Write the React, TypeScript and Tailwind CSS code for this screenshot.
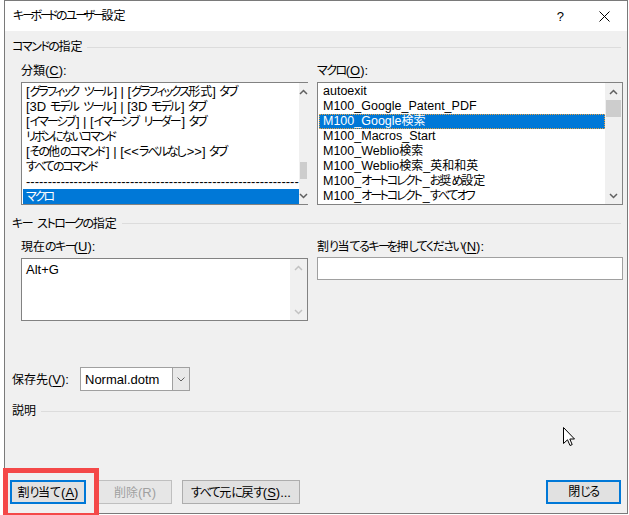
import React from 'react'

const leftItems = [
  '[グラフィック ツール] | [グラフィックス形式] タブ',
  '[3D モデル ツール] | [3D モデル] タブ',
  '[イマーシブ] | [イマーシブ リーダー] タブ',
  'リボンにないコマンド',
  '[その他のコマンド] | [<<ラベルなし>>] タブ',
  'すべてのコマンド',
  '-'.repeat(63),
  'マクロ',
]

const rightItems = [
  'autoexit',
  'M100_Google_Patent_PDF',
  'M100_Google検索',
  'M100_Macros_Start',
  'M100_Weblio検索',
  'M100_Weblio検索_英和和英',
  'M100_オートコレクト_お奨め設定',
  'M100_オートコレクト_すべてオフ',
]

// the dialog font has narrow kana and wider latin than Noto, so split into runs
const kindOf = (c: string) => {
  if (c === 'ー') return 'l'
  const code = c.charCodeAt(0)
  if (code >= 0x3040 && code <= 0x30ff) return 'k'
  if (code >= 0x4e00 && code <= 0x9fff) return 'h'
  return 'a'
}

type Variant = 'normal' | 'title' | 'list'

const runClass: Record<Variant, Record<string, string>> = {
  normal: { a: 'text-[13px]', k: 'tracking-[-1.5px]', l: 'tracking-[-3px]', h: '' },
  title: { a: 'text-[13px]', k: 'tracking-[-2px]', l: 'tracking-[-3.5px]', h: '' },
  list: { a: 'text-[13px]', k: 'tracking-[-2px]', l: 'tracking-[-2.5px]', h: '' },
}

// give latin text after kana back what the kana before it lost
const gapFix: Record<Variant, Record<string, string>> = {
  normal: { k: 'ml-[1.5px]', l: 'ml-[3px]' },
  title: { k: 'ml-[2px]', l: 'ml-[3.5px]' },
  list: { k: 'ml-[2px]', l: 'ml-[2.5px]' },
}

const T = ({ s, v = 'normal', latin }: { s: string; v?: Variant; latin?: string }) => {
  const runs: { k: string; t: string }[] = []
  for (const c of s) {
    const k = kindOf(c)
    const last = runs[runs.length - 1]
    if (last && last.k === k) last.t += c
    else runs.push({ k, t: c })
  }
  return (
    <span className="whitespace-pre">
      {runs.map((r, i) => {
        const prev = runs[i - 1]
        let cls = r.k === 'a' && latin ? latin : runClass[v][r.k]
        if (r.k === 'a' && prev && (prev.k === 'k' || prev.k === 'l')) {
          cls += ' ' + gapFix[v][prev.k]
        }
        return (
          <span key={i} className={cls}>
            {r.t}
          </span>
        )
      })}
    </span>
  )
}

const Chevron = ({ up, disabled }: { up?: boolean; disabled?: boolean }) => (
  <svg width="9" height="6" viewBox="0 0 9 6">
    <polyline
      points={up ? '1,5 4.5,1.5 8,5' : '1,1 4.5,4.5 8,1'}
      fill="none"
      stroke={disabled ? '#c2c2c2' : '#606060'}
      strokeWidth="1.5"
    />
  </svg>
)

const ScrollBar = ({ thumbTop, disabled }: { thumbTop?: string; disabled?: boolean }) => (
  <div className="flex h-full w-[17px] flex-col bg-[#f0f0f0]">
    <div className="flex h-[17px] items-center justify-center">
      <Chevron up disabled={disabled} />
    </div>
    <div className="flex-1">
      {thumbTop && <div className={`mx-px h-[17px] bg-[#cdcdcd] ${thumbTop}`} />}
    </div>
    <div className="flex h-[17px] items-center justify-center">
      <Chevron disabled={disabled} />
    </div>
  </div>
)

const Heading = ({ text, className }: { text: string; className: string }) => (
  <div className={`flex h-[14px] items-center pl-[7px] pr-[6px] ${className}`}>
    <T s={text} />
    <div className="ml-[5px] h-px flex-1 bg-[#dcdcdc]" />
  </div>
)

const Label = ({ pre, key1, post = '):', className = '' }: { pre: string; key1: string; post?: string; className?: string }) => (
  <div className={`flex h-[14px] items-center whitespace-nowrap ${className}`}>
    <span>
      <T s={pre} />
      <span className="text-[13px]">
        (<span className="underline underline-offset-2">{key1}</span>
        {post}
      </span>
    </span>
  </div>
)

const Button = ({
  children,
  w,
  primary,
  disabled,
}: {
  children: React.ReactNode
  w: string
  primary?: boolean
  disabled?: boolean
}) => (
  <div
    className={`flex h-[24px] items-center justify-center bg-[#e1e1e1] ${w} ${
      primary ? 'border-2 border-[#0078d7]' : 'border border-[#adadad]'
    } ${disabled ? 'border-[#bfbfbf] bg-[#e6e6e6] text-[#a0a0a0]' : ''}`}
  >
    {children}
  </div>
)

export default function App() {
  return (
    <div className="relative h-[515px] w-[629px] overflow-hidden bg-white font-['Liberation_Sans','Noto_Sans_CJK_JP',sans-serif] text-[12px] leading-none text-black [font-feature-settings:'palt']">
      <div className="ml-[4px] flex h-[514px] w-[624px] flex-col border border-[#7a7a7a]">
        {/* title bar */}
        <div className="flex h-[30px] items-center bg-white pl-[8px]">
          <T s="キーボードのユーザー設定" v="title" />
          <span className="ml-auto mr-[35px] text-[13px]">?</span>
          <svg width="11" height="11" viewBox="0 0 11 11" className="mr-[17px]">
            <path d="M0.5 0.5 L10.5 10.5 M10.5 0.5 L0.5 10.5" stroke="#000" strokeWidth="1" />
          </svg>
        </div>

        <div className="flex flex-1 flex-col bg-[#f0f0f0]">
          <Heading text="コマンドの指定" className="mt-[9px]" />

          <div className="mt-[9px] flex gap-[9px] pl-[16px]">
            <div className="flex w-[287px] flex-col">
              <Label pre="分類" key1="C" />
              <div className="mt-[5px] flex h-[123px] border border-[#828282] bg-white">
                <div className="flex-1 pt-px pl-[1px]">
                  {leftItems.map((t, i) => (
                    <div
                      key={i}
                      className={`flex h-[15px] items-center whitespace-nowrap pl-[3px] ${
                        i === 7 ? 'bg-[#0078d7] text-white' : ''
                      }`}
                    >
                      <T s={t} v="list" />
                    </div>
                  ))}
                </div>
                <ScrollBar thumbTop="mt-[62px]" />
              </div>
            </div>
            <div className="flex w-[306px] flex-col">
              <Label pre="マクロ" key1="O" />
              <div className="mt-[5px] flex h-[123px] border border-[#828282] bg-white">
                <div className="flex-1 pt-px pl-[1px]">
                  {rightItems.map((t, i) => (
                    <div
                      key={i}
                      className={`flex h-[15px] items-center whitespace-nowrap pl-[4px] ${
                        i === 2
                          ? 'bg-[#0078d7] text-white outline-1 outline-dotted outline-[#e8a040] -outline-offset-1'
                          : ''
                      }`}
                    >
                      <T s={t} v="list" latin="text-[12.5px]" />
                    </div>
                  ))}
                </div>
                <ScrollBar thumbTop="mt-0" />
              </div>
            </div>
          </div>

          <Heading text="キー ストロークの指定" className="mt-[11px]" />

          <div className="mt-[9px] flex gap-[9px] pl-[16px]">
            <div className="flex w-[287px] flex-col">
              <Label pre="現在のキー" key1="U" />
              <div className="mt-[5px] flex h-[63px] border border-[#828282] bg-white">
                <div className="flex-1 pl-[4px] pt-[3px]">
                  <div className="flex h-[15px] items-center text-[13px]">Alt+G</div>
                </div>
                <ScrollBar disabled />
              </div>
            </div>
            <div className="flex w-[306px] flex-col">
              <Label pre="割り当てるキーを押してください" key1="N" />
              <div className="mt-[4px] h-[23px] border border-[#a0a0a0] bg-white" />
            </div>
          </div>

          <div className="mt-[46px] flex items-center pl-[7px]">
            <Label pre="保存先" key1="V" className="w-[62px]" />
            <div className="ml-[6px] flex h-[24px] w-[110px] border border-[#a0a0a0] bg-white">
              <div className="flex flex-1 items-center pl-[4px] text-[13px]">Normal.dotm</div>
              <div className="flex w-[17px] items-center justify-center border-l border-[#a0a0a0] bg-[#e9e9e9]">
                <svg width="8" height="5" viewBox="0 0 8 5">
                  <polyline points="0.5,0.5 4,4 7.5,0.5" fill="none" stroke="#606060" strokeWidth="1" />
                </svg>
              </div>
            </div>
          </div>

          <Heading text="説明" className="mt-[13px]" />

          <div className="mt-[62px] flex items-center pl-[5px] pr-[6px]">
            <Button w="w-[76px]" primary>
              <span>
                <T s="割り当て" />
                <span className="ml-[1.5px] text-[13px]">
                  (<span className="underline underline-offset-2">A</span>)
                </span>
              </span>
            </Button>
            <div className="ml-[12px]">
              <Button w="w-[74px]" disabled>
                <T s="削除(R)" />
              </Button>
            </div>
            <div className="ml-[10px]">
              <Button w="w-[118px]">
                <span>
                  <T s="すべて元に戻す" />
                  <span className="text-[13px]">
                    (<span className="underline underline-offset-2">S</span>)...
                  </span>
                </span>
              </Button>
            </div>
            <div className="ml-auto">
              <Button w="w-[75px]" primary>
                <T s="閉じる" />
              </Button>
            </div>
          </div>
        </div>
      </div>

      {/* mouse pointer */}
      <svg width="13" height="20" viewBox="0 0 13 20" className="absolute left-[563px] top-[427px]">
        <path
          d="M0.5 0.5 L0.5 16.5 L4.5 12.8 L7 18.5 L9.2 17.6 L6.8 12 L11.5 12 Z"
          fill="#fff"
          stroke="#000"
          strokeWidth="1"
        />
      </svg>

      {/* red highlight */}
      <div className="absolute left-[3px] top-[468px] h-[50px] w-[96px] border-[5px] border-[#f44848]" />
    </div>
  )
}
